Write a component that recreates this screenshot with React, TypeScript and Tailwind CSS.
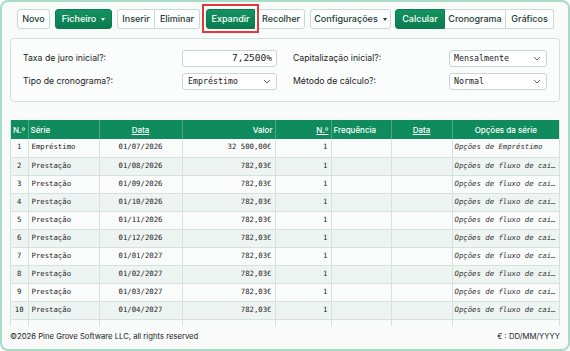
import React from "react";

const rows = [
  ["1", "Empréstimo", "01/07/2026", "32 500,00€", "1", "Opções de Empréstimo"],
  ["2", "Prestação", "01/08/2026", "782,03€", "1", "Opções de fluxo de caixa"],
  ["3", "Prestação", "01/09/2026", "782,03€", "1", "Opções de fluxo de caixa"],
  ["4", "Prestação", "01/10/2026", "782,03€", "1", "Opções de fluxo de caixa"],
  ["5", "Prestação", "01/11/2026", "782,03€", "1", "Opções de fluxo de caixa"],
  ["6", "Prestação", "01/12/2026", "782,03€", "1", "Opções de fluxo de caixa"],
  ["7", "Prestação", "01/01/2027", "782,03€", "1", "Opções de fluxo de caixa"],
  ["8", "Prestação", "01/02/2027", "782,03€", "1", "Opções de fluxo de caixa"],
  ["9", "Prestação", "01/03/2027", "782,03€", "1", "Opções de fluxo de caixa"],
  ["10", "Prestação", "01/04/2027", "782,03€", "1", "Opções de fluxo de caixa"],
  ["", "", "", "", "", ""],
];

const ui = { fontFamily: "Inter, 'Noto Sans', sans-serif" };
const mono = { fontFamily: "'DejaVu Sans Mono', 'Liberation Mono', monospace" };

function Caret() {
  return <span className="ml-[5px] inline-block w-0 h-0 border-l-[2.5px] border-r-[2.5px] border-t-[3px] border-l-transparent border-r-transparent border-t-current" />;
}

function Chevron() {
  return (
    <svg width="8" height="5" viewBox="0 0 8 5" fill="none">
      <path d="M1 1l3 3 3-3" stroke="#555" strokeWidth="0.9" />
    </svg>
  );
}

const btn = "h-[20px] flex items-center justify-center text-[9px] font-medium border";
const light = "bg-[#fdfefe] border-[#c6dcd2] text-[#243c33]";
const green = "bg-gradient-to-b from-[#13935f] to-[#0b7b50] border-[#0b7b50] text-white";

export default function App() {
  return (
    <div style={ui} className="w-[570px] h-[351px] overflow-hidden bg-[#f8fbfa] border-2 border-[#a8dcc6] rounded-[8px] px-[8px] pt-[7px] flex flex-col">
      {/* toolbar */}
      <div className="flex items-center pl-[7px] h-[20px]">
        <div className={`${btn} ${light} w-[33px] rounded-[3px]`}>Novo</div>
        <div className={`${btn} ${green} w-[57px] ml-[5px] rounded-[3px]`}>Ficheiro<Caret /></div>
        <div className="flex ml-[5px]">
          <div className={`${btn} ${light} w-[38px] rounded-l-[3px]`}>Inserir</div>
          <div className={`${btn} ${light} w-[45px] border-l-0 rounded-r-[3px]`}>Eliminar</div>
        </div>
        <div className="flex ml-[6px]">
          <div className="relative">
            <div className={`${btn} ${green} w-[49px] rounded-l-[3px]`}>Expandir</div>
            <span className="absolute left-[-4px] right-[-4px] top-[-5px] bottom-[-4px] border-2 border-[#e0393e]" />
          </div>
          <div className={`${btn} ${light} w-[47px] border-l-0 rounded-r-[3px] ml-[3px]`}>Recolher</div>
        </div>
        <div className={`${btn} ${light} w-[81px] ml-[5px] rounded-[3px]`}>Configurações<Caret /></div>
        <div className="flex ml-[4px]">
          <div className={`${btn} ${green} w-[50px] rounded-l-[3px]`}>Calcular</div>
          <div className={`${btn} ${light} w-[61px] border-l-0`}>Cronograma</div>
          <div className={`${btn} ${light} w-[48px] border-l-0 rounded-r-[3px]`}>Gráficos</div>
        </div>
      </div>

      {/* form card */}
      <div className="mt-[9px] h-[64px] bg-[#fbfdfc] border border-[#cde4da] rounded-[4px] pl-[12px] pr-[10px] pt-[11px] flex flex-col gap-[6px] text-[8.7px] text-[#222]">
        <div className="flex items-center h-[17px]">
          <div className="w-[159px]">Taxa de juro inicial?:</div>
          <div style={mono} className="w-[95px] h-[17px] border border-[#c6d8d0] rounded-[3px] bg-white flex items-center justify-end pr-[4px] text-[9.5px]">7,2500%</div>
          <div className="w-[172px] pl-[16px]">Capitalização inicial?:</div>
          <div style={mono} className="w-[98px] h-[17px] border border-[#c6d8d0] rounded-[3px] bg-white flex items-center justify-between pl-[4px] pr-[5px] text-[8.3px]">Mensalmente<Chevron /></div>
        </div>
        <div className="flex items-center h-[17px]">
          <div className="w-[159px]">Tipo de cronograma?:</div>
          <div style={mono} className="w-[95px] h-[17px] border border-[#c6d8d0] rounded-[3px] bg-white flex items-center justify-between pl-[5px] pr-[5px] text-[8.3px]">Empréstimo<Chevron /></div>
          <div className="w-[172px] pl-[16px]">Método de cálculo?:</div>
          <div style={mono} className="w-[98px] h-[17px] border border-[#c6d8d0] rounded-[3px] bg-white flex items-center justify-between pl-[4px] pr-[5px] text-[8.3px]">Normal<Chevron /></div>
        </div>
      </div>

      {/* table */}
      <div className="mt-[18px] h-[206px] shrink-0 overflow-hidden border-x border-[#d3e2db]">
        <table className="table-fixed border-collapse w-[548px]">
          <colgroup>
            <col className="w-[17px]" />
            <col className="w-[71px]" />
            <col className="w-[83px]" />
            <col className="w-[93px]" />
            <col className="w-[56px]" />
            <col className="w-[60px]" />
            <col className="w-[61px]" />
            <col className="w-[107px]" />
          </colgroup>
          <thead>
            <tr className="h-[19px] bg-[#0f8b5d] text-white text-[8px] font-medium">
              <th className="text-left pl-[2px] font-medium border-r border-[#47a881]">N.º</th>
              <th className="text-left pl-[2px] font-medium border-r border-[#47a881]">Série</th>
              <th className="text-center font-medium underline border-r border-[#47a881]">Data</th>
              <th className="text-right pr-[2px] font-medium border-r border-[#47a881]">Valor</th>
              <th className="text-right pr-[2px] font-medium underline border-r border-[#47a881]">N.º</th>
              <th className="text-left pl-[2px] font-medium border-r border-[#47a881]">Frequência</th>
              <th className="text-center font-medium underline border-r border-[#47a881]">Data</th>
              <th className="text-center font-medium">Opções da série</th>
            </tr>
          </thead>
          <tbody style={mono} className="text-[7.3px] text-[#222]">
            {rows.map((r, i) => (
              <tr key={i} className={`h-[18px] border-b border-[#d6e3dd] ${i % 2 === 0 ? "bg-[#fafcfb]" : "bg-[#eef4f1]"}`}>
                <td className="text-center border-r border-[#d6e3dd]">{r[0]}</td>
                <td className="pl-[3px] border-r border-[#d6e3dd]">{r[1]}</td>
                <td className="text-center border-r border-[#d6e3dd]">{r[2]}</td>
                <td className="text-right pr-[3px] border-r border-[#d6e3dd]">{r[3]}</td>
                <td className="text-right pr-[3px] border-r border-[#d6e3dd]">{r[4]}</td>
                <td className="border-r border-[#d6e3dd]"></td>
                <td className="border-r border-[#d6e3dd]"></td>
                <td className="pl-[2px] pr-[1px] italic text-[#333] overflow-hidden whitespace-nowrap text-ellipsis">{r[5]}</td>
              </tr>
            ))}
          </tbody>
        </table>
      </div>

      {/* footer */}
      <div className="flex justify-between items-center mt-[3px] h-[16px] text-[7.7px] text-[#222]">
        <span>©2026 Pine Grove Software LLC, all rights reserved</span>
        <span>€ : DD/MM/YYYY</span>
      </div>
    </div>
  );
}
